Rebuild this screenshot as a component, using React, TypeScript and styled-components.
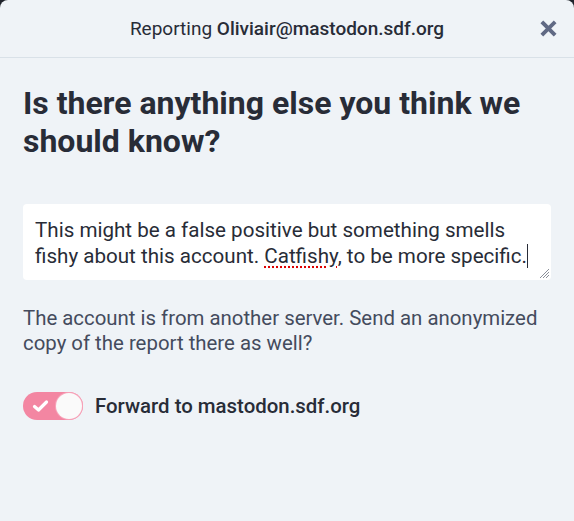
import React from 'react';
import styled, { createGlobalStyle } from 'styled-components';

const GlobalStyle = createGlobalStyle`
  html, body {
    margin: 0;
    padding: 0;
    background: #1f232b;
  }
  body {
    font-family: Roboto, 'Noto Sans', sans-serif;
  }
`;

const Modal = styled.div`
  width: 574px;
  height: 521px;
  background: #eff3f7;
  border-radius: 8px 8px 0 0;
  display: flex;
  flex-direction: column;
  color: #282c37;
  overflow: hidden;
`;

const Header = styled.div`
  height: 57px;
  flex-shrink: 0;
  display: flex;
  align-items: center;
  justify-content: center;
  position: relative;
  border-bottom: 1px solid #d9e1e8;
  font-size: 19px;
  color: #282c37;
  strong {
    font-weight: 500;
  }
`;

const CloseButton = styled.button`
  position: absolute;
  right: 17px;
  top: 19px;
  width: 18px;
  height: 18px;
  padding: 0;
  border: 0;
  background: none;
  color: #606984;
  display: flex;
  align-items: center;
  justify-content: center;
`;

const Body = styled.div`
  padding: 26px 23px;
  display: flex;
  flex-direction: column;
`;

const Title = styled.h1`
  margin: 0;
  font-size: 32px;
  line-height: 38px;
  font-weight: 700;
  color: #282c37;
`;

const TextArea = styled.div`
  margin-top: 44px;
  background: #fff;
  border-radius: 4px;
  padding: 13px 12px 11px;
  font-size: 20.6px;
  line-height: 26px;
  color: #282c37;
  position: relative;
`;

const Misspelled = styled.span`
  text-decoration: underline dotted #d00;
  text-underline-offset: 3px;
`;

const Caret = styled.span`
  display: inline-block;
  width: 1.5px;
  height: 24px;
  background: #282c37;
  vertical-align: -5px;
`;

const Grip = styled.svg`
  position: absolute;
  right: 2px;
  bottom: 2px;
`;

const Hint = styled.p`
  margin: 26px 0 0;
  font-size: 20.4px;
  line-height: 25px;
  color: #444b5d;
`;

const ToggleRow = styled.label`
  margin-top: 36px;
  display: flex;
  align-items: center;
  gap: 12px;
  font-size: 20.4px;
  font-weight: 500;
  color: #282c37;
`;

const Track = styled.span<{ $on: boolean }>`
  width: 60px;
  height: 28px;
  border-radius: 14px;
  background: ${p => (p.$on ? '#f386a2' : '#c0cdd9')};
  display: flex;
  align-items: center;
  justify-content: space-between;
  padding: 0 1px 0 9px;
  box-sizing: border-box;
  flex-shrink: 0;
`;

const Thumb = styled.span`
  width: 26px;
  height: 26px;
  border-radius: 50%;
  background: #fafafa;
  box-shadow: 0 0 0 1px #f7a3b9;
`;

export default function App() {
  return (
    <>
      <GlobalStyle />
      <Modal>
        <Header>
          <span>
            Reporting <strong>Oliviair@mastodon.sdf.org</strong>
          </span>
          <CloseButton aria-label="Close">
            <svg width="17" height="17" viewBox="0 0 16 16">
              <path
                d="M3 3 L13 13 M13 3 L3 13"
                stroke="currentColor"
                strokeWidth="3.6"
                strokeLinecap="square"
              />
            </svg>
          </CloseButton>
        </Header>
        <Body>
          <Title>Is there anything else you think we should know?</Title>
          <TextArea>
            This might be a false positive but something smells fishy about
            this account. <Misspelled>Catfishy</Misspelled>, to be more
            specific.
            <Caret />
            <Grip width="10" height="10" viewBox="0 0 10 10">
              <path
                d="M10 1 L1 10 M10 4 L4 10 M10 7 L7 10"
                stroke="#8a8f99"
                strokeWidth="1"
              />
            </Grip>
          </TextArea>
          <Hint>
            The account is from another server. Send an anonymized copy of the
            report there as well?
          </Hint>
          <ToggleRow>
            <Track $on>
              <svg width="17" height="14" viewBox="0 0 17 14">
                <path
                  d="M2.5 7.5 L6.5 11 L14.5 3"
                  fill="none"
                  stroke="#fff"
                  strokeWidth="3.2"
                  strokeLinecap="round"
                  strokeLinejoin="round"
                />
              </svg>
              <Thumb />
            </Track>
            Forward to mastodon.sdf.org
          </ToggleRow>
        </Body>
      </Modal>
    </>
  );
}
